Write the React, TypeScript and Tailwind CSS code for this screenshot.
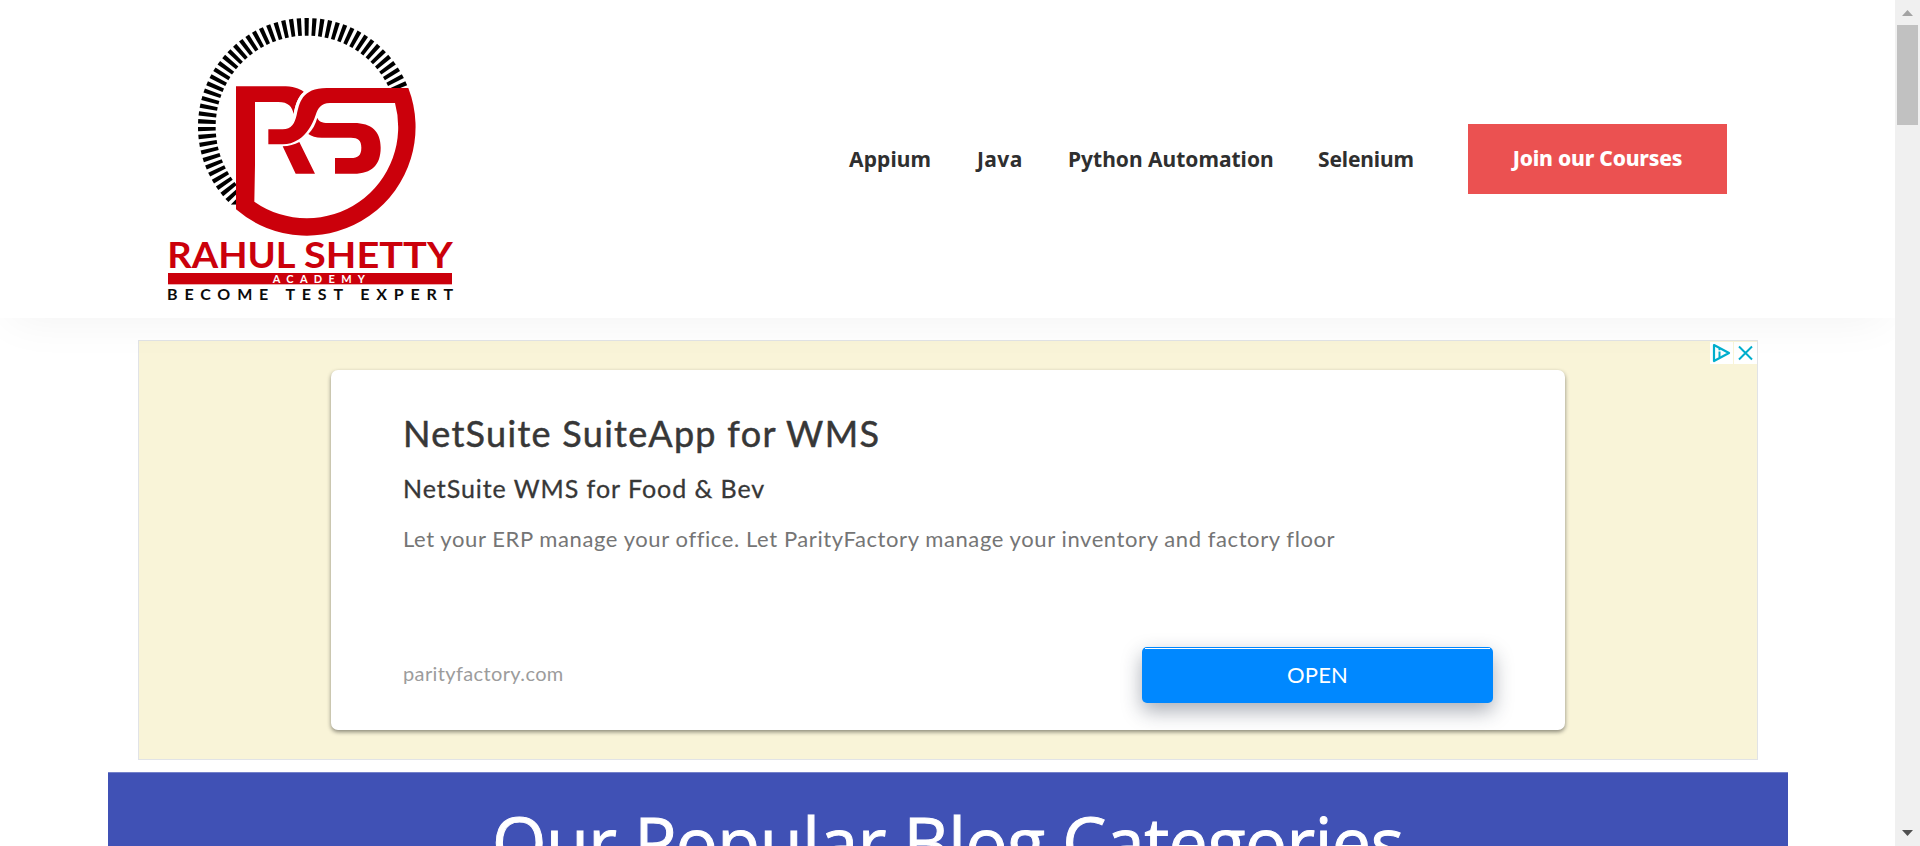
const STEP = 4.15;
const ticks = Array.from({ length: 50 }, (_, i) => (i - 33) * STEP);

function Logo() {
  return (
    <svg viewBox="0 0 960 954" className="h-[318px] w-[320px]" aria-label="Rahul Shetty Academy">
      <defs>
        <clipPath id="dial">
          <path d="M0 0H960V264H258V614H0Z" />
        </clipPath>
      </defs>
      <g clipPath="url(#dial)">
        {ticks.map((a) => (
          <path key={a} d="M463.5 54h13l-1 53h-11z" fill="#000" transform={`rotate(${a.toFixed(2)} 470 380)`} />
        ))}
      </g>
      <g fill="#cb000b">
        <path d="M258 259H395C430 259 447 265 462 276C445 290 436 312 431 343C427 320 415 306 385 306H315V495L313 605A274 274 0 0 0 735 309H540C512 309 503 327 497 345C487 375 470 402 447 418C430 429 415 433 398 433H355V388H398C425 388 434 370 440 345C448 310 455 264 530 264H775A326 326 0 0 1 258 628Z" />
        <path d="M398 439C417 438 433 434 448 426L495 521H437Z" />
        <path d="M502 353C505 363 515 369 535 369H612C665 369 692 395 692 443C692 495 665 521 612 521H555V474H603C624 474 634 466 634 443C634 421 624 413 603 413H515C497 413 485 409 475 402C488 389 497 372 502 353Z" />
        <rect x="54" y="819" width="852" height="34" />
      </g>
      <path d="M464 276C444 292 437 316 431 352" fill="none" stroke="#fff" strokeWidth="4" />
      <g fontFamily="Lato, sans-serif">
        <text x="52" y="805" fontSize="108" fontWeight="700" fill="#cb000b" textLength="385" lengthAdjust="spacingAndGlyphs">RAHUL</text>
        <text x="462" y="805" fontSize="108" fontWeight="700" fill="#cb000b" textLength="446" lengthAdjust="spacingAndGlyphs">SHETTY</text>
        <text x="368" y="848" fontSize="33" fontWeight="700" fill="#fff" textLength="277" lengthAdjust="spacing">ACADEMY</text>
        <text x="51" y="899" fontSize="48" fontWeight="700" fill="#0b0b0b" textLength="858" lengthAdjust="spacing">BECOME TEST EXPERT</text>
      </g>
    </svg>
  );
}

function Header() {
  return (
    <header className="relative z-10 flex h-[318px] items-center justify-between bg-white pr-[168px] pl-[150px] shadow-[0_10px_45px_-10px_rgba(0,0,0,0.06)]">
      <Logo />
      <div className="flex items-center gap-[55px] font-['Noto_Sans',sans-serif] text-[21px] font-bold whitespace-nowrap text-[#2f2f2f]">
        <nav className="flex gap-[46px] pt-[2px]">
          <a className="w-[81px] tracking-[0.1px]">Appium</a>
          <a className="w-[45px] pl-px tracking-[0.4px]">Java</a>
          <a className="w-[205px] pl-px">Python Automation</a>
          <a className="w-[95px] tracking-[-0.15px]">Selenium</a>
        </nav>
        <a className="flex h-[70px] w-[259px] items-center justify-center bg-[#eb5151] font-extrabold tracking-[-0.2px] text-white">Join our Courses</a>
      </div>
    </header>
  );
}

function Ad() {
  return (
    <section className="relative mt-[22px] ml-[138px] h-[420px] w-[1620px] border border-[#e1e3e6] bg-[#f9f4d8] px-[192px] pt-[29px] font-['Lato',sans-serif]">
      <div className="absolute top-px right-0 flex gap-px">
        <span className="flex h-[22px] w-[23px] items-center justify-center bg-white">
          <svg viewBox="0 0 23 22" className="h-[22px] w-[23px]" fill="none" stroke="#00aecd">
            <path d="M4 3L19 11L4 19Z" strokeWidth="2.2" strokeLinejoin="round" />
            <path d="M9.5 9.5v6M9.5 6.5v1.8" strokeWidth="2" />
          </svg>
        </span>
        <span className="flex h-[22px] w-[23px] items-center justify-center bg-white">
          <svg viewBox="0 0 23 22" className="h-[22px] w-[23px]" fill="none" stroke="#00aecd" strokeWidth="2">
            <path d="M5 4.5L18 17.5M18 4.5L5 17.5" />
          </svg>
        </span>
      </div>
      <div className="flex h-[360px] w-[1234px] flex-col rounded-[7px] bg-white pt-[41px] pr-[72px] pl-[72px] shadow-[0_2px_4px_rgba(0,0,0,0.45)]">
        <h2 className="text-[36px] leading-[44px] tracking-[1.3px] text-[#373737] [-webkit-text-stroke:0.5px_#373737]">NetSuite SuiteApp for WMS</h2>
        <h3 className="mt-[18px] text-[25px] leading-[30px] tracking-[0.95px] text-[#373737] [-webkit-text-stroke:0.3px_#373737]">NetSuite WMS for Food &amp; Bev</h3>
        <p className="mt-[22px] text-[22px] leading-[28px] tracking-[0.59px] text-[#757575]">
          Let your ERP manage your office. Let ParityFactory manage your inventory and factory floor
        </p>
        <div className="mt-[94px] flex items-start justify-between">
          <span className="mt-[14px] text-[20px] leading-[24px] tracking-[0.37px] text-[#9c9c9c]">parityfactory.com</span>
          <a className="flex h-[56px] w-[351px] flex-col rounded-[5px] bg-[#0088ff] pt-px text-[22px] tracking-[0.15px] text-white shadow-[0_8px_20px_rgba(30,40,60,0.38)]">
            <span className="mx-[3px] h-px bg-white" />
            <span className="flex grow items-center justify-center pb-[3px]">OPEN</span>
          </a>
        </div>
      </div>
    </section>
  );
}

function Scrollbar() {
  return (
    <aside className="flex h-full w-[25px] flex-col items-center bg-[#f0f0f0]">
      <svg viewBox="0 0 25 25" className="h-[25px] w-[25px]">
        <path d="M7 16L12.5 10L18 16Z" fill="#a3a3a3" />
      </svg>
      <div className="h-[100px] w-[21px] bg-[#c1c1c1]" />
      <svg viewBox="0 0 25 25" className="mt-auto h-[25px] w-[25px]">
        <path d="M7 9L12.5 15L18 9Z" fill="#505050" />
      </svg>
    </aside>
  );
}

export default function App() {
  return (
    <div className="flex h-[846px] w-[1920px] overflow-hidden bg-white">
      <main className="h-full w-[1895px] overflow-hidden">
        <Header />
        <Ad />
        <section className="mt-[12px] ml-[108px] h-[200px] w-[1679.5px] border-t border-[#7481ca] bg-[#4051b5] pt-[33px]">
          <h1 className="text-center font-['Open_Sans',sans-serif] text-[70px] leading-[70px] tracking-[-0.5px] text-white [-webkit-text-stroke:1px_white]">
            Our Popular Blog Categories
          </h1>
        </section>
      </main>
      <Scrollbar />
    </div>
  );
}
